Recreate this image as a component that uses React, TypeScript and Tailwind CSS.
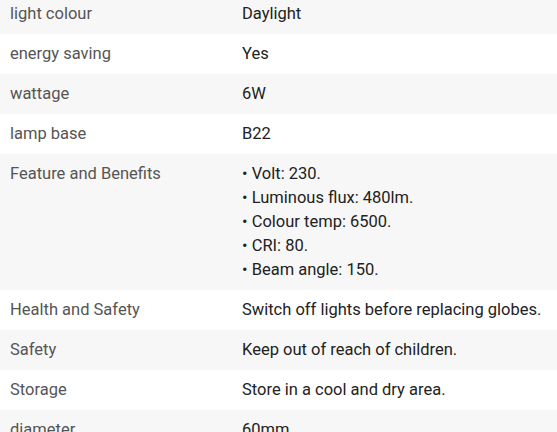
const rows: { label: string; value: string | string[] }[] = [
  { label: 'light colour', value: 'Daylight' },
  { label: 'energy saving', value: 'Yes' },
  { label: 'wattage', value: '6W' },
  { label: 'lamp base', value: 'B22' },
  {
    label: 'Feature and Benefits',
    value: [
      'Volt: 230.',
      'Luminous flux: 480lm.',
      'Colour temp: 6500.',
      'CRI: 80.',
      'Beam angle: 150.',
    ],
  },
  { label: 'Health and Safety', value: 'Switch off lights before replacing globes.' },
  { label: 'Safety', value: 'Keep out of reach of children.' },
  { label: 'Storage', value: 'Store in a cool and dry area.' },
  { label: 'diameter', value: '60mm' },
];

export default function App() {
  return (
    <div className="bg-white h-[432px] overflow-hidden font-['Roboto',sans-serif] text-[16.5px] leading-6">
      <div className="-mt-[6px]">
        {rows.map((row, i) => (
          <div
            key={row.label}
            className={`grid grid-cols-[232px_1fr] ${i % 2 === 0 ? 'bg-[#f7f7f7]' : 'bg-white'}`}
          >
            <div className="px-[10px] py-2 text-[#555]">{row.label}</div>
            <div className="px-[10px] py-2 text-[#222]">
              {Array.isArray(row.value)
                ? row.value.map((line) => <div key={line}>• {line}</div>)
                : row.value}
            </div>
          </div>
        ))}
      </div>
    </div>
  );
}
